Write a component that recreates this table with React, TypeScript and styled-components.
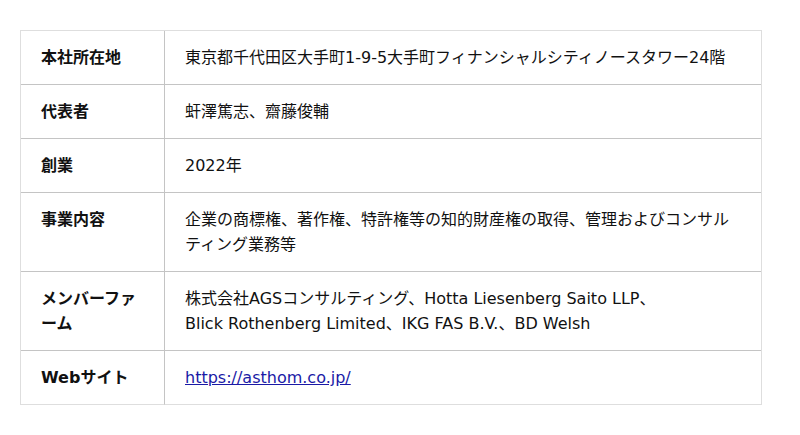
import React from "react";
import styled, { createGlobalStyle } from "styled-components";

const GlobalStyle = createGlobalStyle`
  html, body { margin: 0; padding: 0; background: #ffffff; }
  body {
    font-family: "DejaVu Sans", "Noto Sans CJK JP", sans-serif;
    color: #111111;
  }
`;

const Page = styled.div`
  padding: 30px 20px;
`;

const Table = styled.div`
  width: 742px;
  box-sizing: border-box;
  display: grid;
  grid-template-columns: 144px 1fr;
  border: 1px solid #dedede;
  border-bottom: none;
`;

const Cell = styled.div<{ $label?: boolean; $last?: boolean }>`
  padding: 14px 20px 14px 20px;
  font-size: 16px;
  line-height: 25px;
  font-weight: ${(p) => (p.$label ? 700 : 400)};
  border-bottom: 1px solid ${(p) => (p.$last ? "#dedede" : "#c4c4c4")};
  border-right: ${(p) => (p.$label ? "1px solid #c4c4c4" : "none")};
  color: #111111;
`;

const Link = styled.a`
  color: #1a1aa6;
  text-decoration: underline;
`;

const rows: { label: React.ReactNode; value: React.ReactNode }[] = [
  { label: "本社所在地", value: "東京都千代田区大手町1-9-5大手町フィナンシャルシティノースタワー24階" },
  { label: "代表者", value: "虷澤篤志、齋藤俊輔" },
  { label: "創業", value: "2022年" },
  {
    label: "事業内容",
    value: "企業の商標権、著作権、特許権等の知的財産権の取得、管理およびコンサルティング業務等",
  },
  {
    label: (
      <>
        メンバーファ
        <br />
        ーム
      </>
    ),
    value: (
      <>
        株式会社AGSコンサルティング、Hotta Liesenberg Saito LLP、
        <br />
        Blick Rothenberg Limited、IKG FAS B.V.、BD Welsh
      </>
    ),
  },
  {
    label: "Webサイト",
    value: <Link href="https://asthom.co.jp/">https://asthom.co.jp/</Link>,
  },
];

export default function App() {
  return (
    <>
      <GlobalStyle />
      <Page>
        <Table>
          {rows.map((r, i) => (
            <React.Fragment key={i}>
              <Cell $label $last={i === rows.length - 1}>{r.label}</Cell>
              <Cell $last={i === rows.length - 1}>{r.value}</Cell>
            </React.Fragment>
          ))}
        </Table>
      </Page>
    </>
  );
}
